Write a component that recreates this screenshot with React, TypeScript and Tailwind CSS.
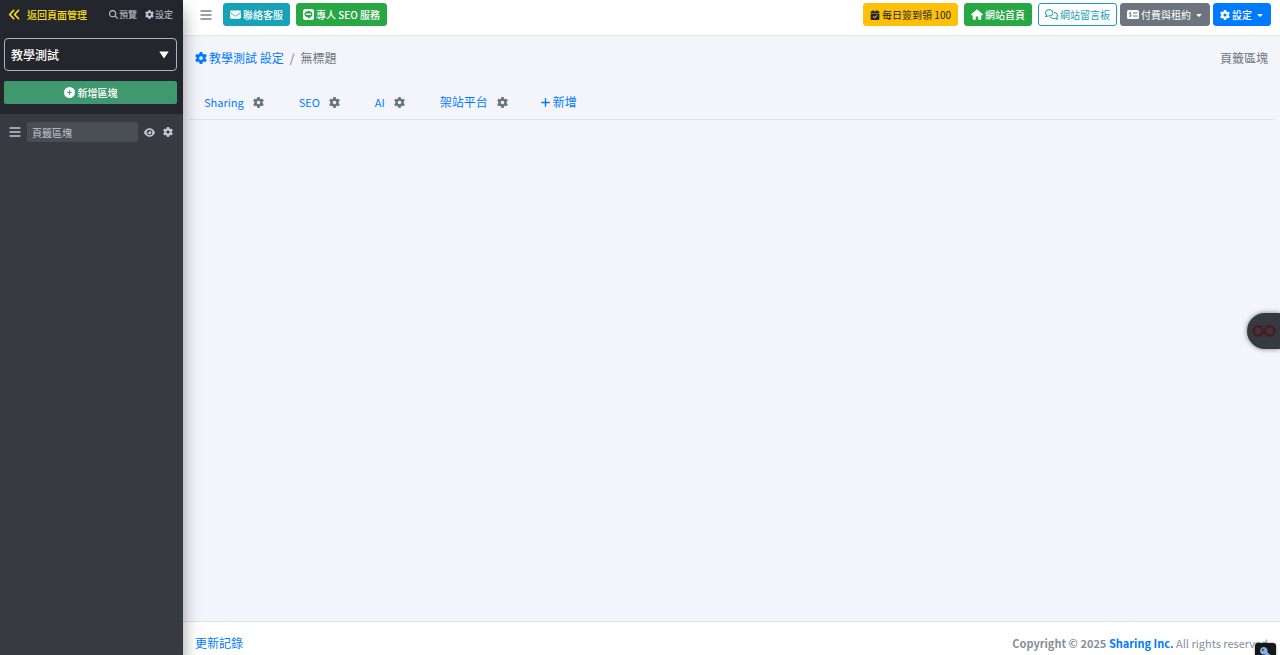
import { useState } from 'react'
import {
    FaAnglesLeft, FaMagnifyingGlass, FaGear, FaCirclePlus, FaEye, FaEnvelope,
    FaCalendarCheck, FaRegComments, FaPlus, FaCaretDown, FaKey,
} from 'react-icons/fa6'

const btn = 'flex h-[23px] items-center gap-[2px] whitespace-nowrap rounded-[3px] border px-[6px] text-[10px] leading-none'

const tabs = ['Sharing', 'SEO', 'AI', '架站平台']

const BarsIcon = () => (
    <svg viewBox="0 0 12 12" className="size-3" stroke="currentColor" strokeWidth="1.5">
        <path d="M0.5 2h11M0.5 6h11M0.5 10h11" />
    </svg>
)

const HomeIcon = () => (
    <svg viewBox="0 0 24 22" className="h-[11px] w-3" fill="currentColor">
        <path d="M12 0.500 0.500 10.500c-.7.8-.2 2 .8 2H3.500V19.500c0 1.100.9 2 2 2H9.500V15h5v6.500h4c1.100 0 2-.9 2-2v-7h2.200c1 0 1.500-1.200.8-2z" />
    </svg>
)

const LineIcon = () => (
    <svg viewBox="0 0 22 22" className="size-[11px]">
        <rect width="22" height="22" rx="5" fill="#fff" />
        <path d="M11 4C6.3 4 3 6.800 3 10.300c0 3.200 2.900 5.700 6.700 6.200 1 .2.7 1 .6 2.500 3-1.400 8.700-4.800 8.700-8.700C19 6.800 15.700 4 11 4z" fill="#28a745" />
        <path d="M6 10.500h10" stroke="#fff" strokeWidth="3" />
    </svg>
)

const CheckIcon = () => (
    <svg viewBox="0 0 24 18" className="h-[9px] w-3">
        <rect width="24" height="18" rx="3" fill="#fff" />
        <path d="M12 6h9M12 12h9" stroke="#6c757d" strokeWidth="2" />
        <path d="M8.500 6c-1-1-4-1-4 .8S8.500 8.600 8.500 11s-3.200 2-4.500 1M6.500 3.500v11" stroke="#6c757d" strokeWidth="1.500" fill="none" />
    </svg>
)

const Sidebar = () => {
    const [page, setPage] = useState('教學測試')
    const [block, setBlock] = useState('頁籤區塊')

    return (
        <aside className="z-10 w-[183px] shrink-0 bg-[#373a41] text-[#c2c7d0] shadow-[0_10px_16px_rgba(0,0,0,0.4)]">
            <div className="bg-[#23262c] px-1 pb-[10px]">
                <div className="flex h-[29px] items-center pl-1 pr-[6px] text-[9px]">
                    <a href="#" className="flex items-center gap-[6px] text-[10px] font-medium text-[#f8dc1c]">
                        <FaAnglesLeft className="size-[13px]" />
                        返回頁面管理
                    </a>
                    <a href="#" className="ml-auto flex items-center gap-px"><FaMagnifyingGlass className="size-[9px]" />預覽</a>
                    <a href="#" className="ml-2 flex items-center gap-px"><FaGear className="size-[9px]" />設定</a>
                </div>
                <div className="relative mt-[9px] mr-[2px]">
                    <select
                        aria-label="頁面"
                        className="h-[33px] w-full appearance-none rounded border border-[#b0b3b8] bg-transparent px-[6px] text-[12px] font-medium text-white"
                        value={page}
                        onChange={(e) => setPage(e.target.value)}
                    >
                        <option>教學測試</option>
                    </select>
                    <svg viewBox="0 0 10 8" className="pointer-events-none absolute right-2 top-[13px] h-2 w-[10px]" fill="#fff">
                        <path d="M0.3 0.5h9.4L5 7.5z" />
                    </svg>
                </div>
                <button className="mt-[10px] flex h-[23px] w-[calc(100%-2px)] items-center justify-center gap-[3px] rounded-[2px] bg-[#40986f] text-[10px] font-medium text-white">
                    <FaCirclePlus className="size-[11px]" />新增區塊
                </button>
            </div>
            <div className="flex items-center pl-[9px] pr-[10px] pt-2">
                <button aria-label="拖曳"><BarsIcon /></button>
                <input
                    aria-label="區塊名稱"
                    className="ml-[6px] h-5 w-[111px] rounded-[2px] bg-[#494d54] px-[5px] text-[10px] leading-[18px]"
                    value={block}
                    onChange={(e) => setBlock(e.target.value)}
                />
                <button aria-label="顯示" className="ml-auto"><FaEye className="size-[11px]" /></button>
                <button aria-label="區塊設定" className="ml-2"><FaGear className="size-[10px]" /></button>
            </div>
        </aside>
    )
}

const Header = () => {
    return (
        <header className="flex h-9 items-start border-b border-[#e4e7ec] bg-white pl-[17px] pr-[9px] pt-[3px]">
            <button aria-label="選單" className="flex h-6 items-center text-[#7b7f84]"><BarsIcon /></button>
            <div className="ml-[11px] flex gap-[6px]">
                <a href="#" className={btn + ' border-[#17a2b8] bg-[#17a2b8] font-medium text-white'}><FaEnvelope className="size-[11px]" />聯絡客服</a>
                <a href="#" className={btn + ' border-[#28a745] bg-[#28a745] font-medium text-white'}><LineIcon />專人 SEO 服務</a>
            </div>
            <div className="ml-auto flex gap-[6px]">
                <button className={btn + ' border-[#ffc107] bg-[#ffc107] text-[#212529]'}><FaCalendarCheck className="size-[10px]" />每日簽到領 100</button>
                <a href="#" className={btn + ' border-[#28a745] bg-[#28a745] font-medium text-white'}><HomeIcon />網站首頁</a>
                <a href="#" className={btn + ' border-[#17a2b8] bg-white text-[#17a2b8]'}><FaRegComments className="size-[13px]" />網站留言板</a>
                <div className="-ml-[3px] flex gap-[3px]">
                    <button className={btn + ' border-[#6c757d] bg-[#6c757d] text-white'}>
                        <CheckIcon />付費與租約<FaCaretDown className="ml-[2px] size-2" />
                    </button>
                    <button className={btn + ' border-[#007bff] bg-[#007bff] font-medium text-white'}>
                        <FaGear className="size-[10px]" />設定<FaCaretDown className="ml-[2px] size-2" />
                    </button>
                </div>
            </div>
        </header>
    )
}

export default function App() {
    return (
        <div className="flex min-h-screen bg-[#f4f5fa] font-['Noto_Sans_CJK_TC',sans-serif] text-[12px] leading-[18px]">
            <Sidebar />
            <div className="flex min-w-0 flex-1 flex-col">
                <Header />
                <main className="flex-1">
                    <div className="flex items-center justify-between px-3 pt-[13px] text-[#6c757d]">
                        <nav className="flex items-center">
                            <a href="#" className="flex items-center gap-[2px] text-[#007bff]"><FaGear className="size-3" />教學測試 設定</a>
                            <span className="px-[6px]">/</span>
                            <span>無標題</span>
                        </nav>
                        <span>頁籤區塊</span>
                    </div>
                    <div className="mx-[6px] mt-[18px] flex h-[35px] items-center border-b border-[#dfe2e7] pl-[15px] text-[11px]">
                        {tabs.map((t) => (
                            <div key={t} className="mr-[35px] flex items-center gap-[9px]">
                                <a href="#" className={/^\w/.test(t) ? 'text-[#007bff]' : 'text-[12px] text-[#007bff]'}>{t}</a>
                                <button aria-label={t}><FaGear className="size-[11px] text-[#6c757d]" /></button>
                            </div>
                        ))}
                        <button className="-ml-[3px] flex items-center gap-[2px] text-[12px] text-[#007bff]"><FaPlus className="size-[11px]" />新增</button>
                    </div>
                </main>
                <footer className="flex h-[34px] items-end justify-between border-t border-[#dee2e6] bg-white pl-3 pr-[9px] pb-[3px] text-[#869099]">
                    <a href="#" className="text-[#007bff]">更新記錄</a>
                    <span className="text-[11px]">
                        <b>Copyright © 2025 <a href="#" className="text-[#007bff]">Sharing Inc.</a></b> All rights reserved.
                    </span>
                </footer>
            </div>
            {/* floating buttons */}
            <button aria-label="助手" className="fixed right-0 top-[313px] z-20 flex h-9 w-[33px] items-center justify-center rounded-l-full bg-[#343a40] shadow-[0_0_5px_rgba(0,0,0,0.5)]">
                <svg viewBox="0 0 24 14" className="h-[14px] w-6" fill="none" stroke="#4d1b1d" strokeWidth="2.6">
                    <path d="M12 7C9.500 3.500 8.300 2.200 6.300 2.200a4.800 4.800 0 0 0 0 9.600C8.300 11.800 9.500 10.500 12 7s3.700-4.800 5.700-4.800a4.800 4.800 0 0 1 0 9.600C15.700 11.800 14.500 10.500 12 7z" />
                </svg>
            </button>
            <button aria-label="工具" className="fixed bottom-0 right-1 z-20 flex h-3 w-[21px] items-start justify-center overflow-hidden rounded-t-[3px] bg-[#15171a] pt-1 shadow-[0_0_3px_rgba(0,0,0,0.4)]">
                <FaKey className="size-[11px] shrink-0 -scale-x-100 text-[#86aede]" />
            </button>
        </div>
    )
}
